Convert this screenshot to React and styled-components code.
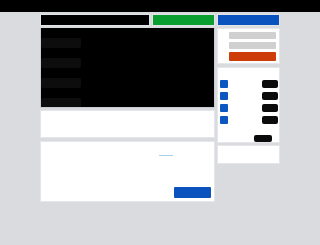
import React from "react";
import styled, { createGlobalStyle } from "styled-components";

const Global = createGlobalStyle`
  html, body { margin: 0; padding: 0; }
  body {
    background: #d9dbdf;
    font-family: "Liberation Sans", Arial, sans-serif;
    width: 320px;
    height: 245px;
    overflow: hidden;
  }
`;

const Header = styled.div`
  height: 12px;
  background: #000;
`;

const Page = styled.div`
  width: 240px;
  margin: 2px auto 0;
  display: flex;
  flex-direction: column;
  gap: 2px;
`;

const TabRow = styled.div`
  display: grid;
  grid-template-columns: 110px 63px 63px;
  gap: 2px;
  height: 12px;
`;

const Tab = styled.div`
  background: ${(p) => p.$color};
  border: 1px solid #e2e4e8;
  box-sizing: border-box;
`;

const Body = styled.div`
  display: grid;
  grid-template-columns: 175px 63px;
  gap: 2px;
  align-items: start;
`;

const Column = styled.div`
  display: flex;
  flex-direction: column;
  gap: ${(p) => p.$gap || 2}px;
`;

const Panel = styled.div`
  background: #fff;
  border: 1px solid #e4e6ea;
  box-sizing: border-box;
  height: ${(p) => p.$h}px;
  position: relative;
`;

const Video = styled.div`
  background: #000;
  border: 1px solid #c9ccd1;
  border-top: none;
  box-sizing: border-box;
  height: 80px;
  padding-top: 10px;
  display: flex;
  flex-direction: column;
  gap: 10px;
  overflow: hidden;
`;

const Ghost = styled.div`
  width: 40px;
  height: 10px;
  flex: none;
  border-radius: 2px;
  background: #0d0d0d;
`;

const Grip = styled.div`
  position: absolute;
  left: 118px;
  top: 13px;
  width: 14px;
  height: 1px;
  background: #a6cdea;
`;

const Submit = styled.div`
  position: absolute;
  right: 3px;
  bottom: 3px;
  width: 37px;
  height: 11px;
  border-radius: 1px;
  background: #0a53be;
`;

const Actions = styled(Panel)`
  display: flex;
  flex-direction: column;
  align-items: flex-end;
  gap: 3px;
  padding: 3px 3px 0 0;
`;

const Bar = styled.div`
  width: 47px;
  height: ${(p) => (p.$tall ? 9 : 7)}px;
  border-radius: 1px;
  background: ${(p) => p.$color};
`;

const List = styled(Panel)`
  padding: 12px 1px 0 2px;
  display: flex;
  flex-direction: column;
  gap: 4px;
`;

const Item = styled.div`
  display: flex;
  justify-content: space-between;
  align-items: center;
  height: 8px;
`;

const Check = styled.div`
  width: 8px;
  height: 8px;
  border-radius: 1px;
  background: #0a57c2;
`;

const Pill = styled.div`
  width: ${(p) => p.$w || 16}px;
  height: ${(p) => p.$h || 8}px;
  border-radius: 2px;
  background: #0b0b0b;
`;

const Divider = styled.div`
  height: 1px;
  background: #eceef1;
  margin: 1px 0 2px;
`;

const Foot = styled.div`
  display: flex;
  justify-content: flex-end;
  padding-right: 6px;
`;

export default function App() {
  return (
    <>
      <Global />
      <Header />
      <Page>
        <TabRow>
          <Tab $color="#000" />
          <Tab $color="#0a9e30" />
          <Tab $color="#0a53be" />
        </TabRow>
        <Body>
          <Column>
            <Video>
              <Ghost />
              <Ghost />
              <Ghost />
              <Ghost />
            </Video>
            <Panel $h={28} />
            <Panel $h={61} style={{ marginTop: 1 }}>
              <Grip />
              <Submit />
            </Panel>
          </Column>
          <Column $gap={3}>
            <Actions $h={36}>
              <Bar $color="#d0d0d0" />
              <Bar $color="#d0d0d0" />
              <Bar $color="#cc3d0a" $tall />
            </Actions>
            <List $h={76}>
              <Item><Check /><Pill /></Item>
              <Item><Check /><Pill /></Item>
              <Item><Check /><Pill /></Item>
              <Item><Check /><Pill /></Item>
              <Divider />
              <Foot><Pill $w={18} $h={7} /></Foot>
            </List>
            <Panel $h={19} style={{ marginTop: -1 }} />
          </Column>
        </Body>
      </Page>
    </>
  );
}
